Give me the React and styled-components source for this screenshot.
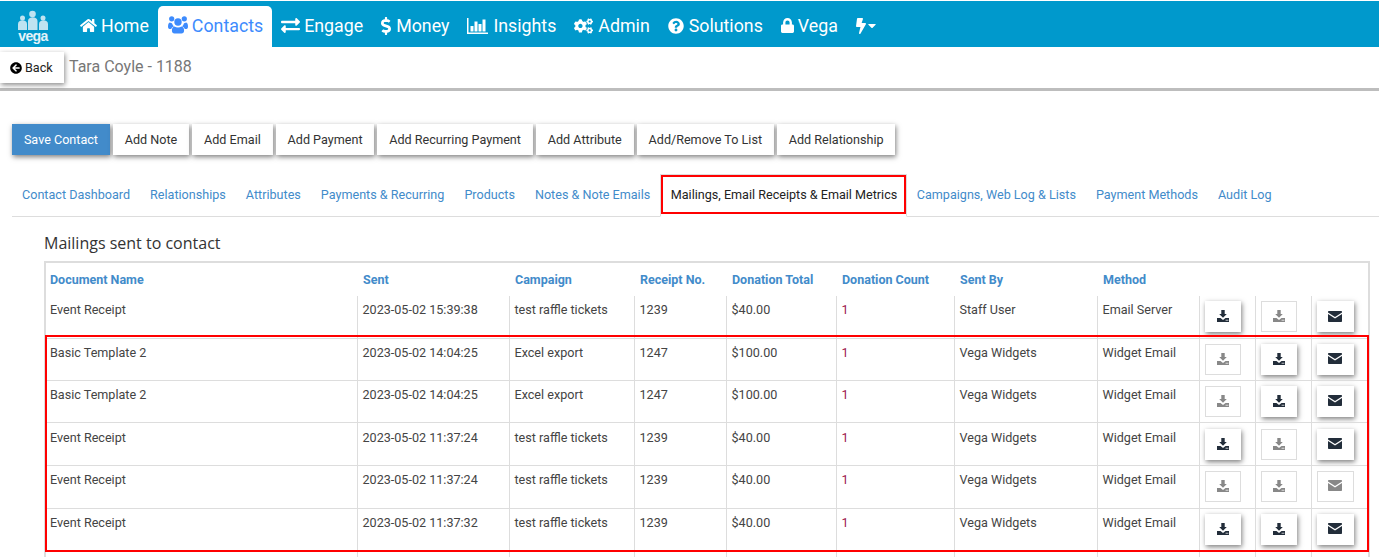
import React from 'react';
import styled, { createGlobalStyle } from 'styled-components';
import {
    FaHome, FaExchangeAlt, FaDollarSign, FaCogs, FaQuestionCircle,
    FaLock, FaBolt, FaCaretDown, FaArrowCircleLeft,
} from 'react-icons/fa';

const GlobalStyle = createGlobalStyle`
    html, body {
        margin: 0;
        padding: 0;
        background: #fff;
        font-family: Roboto, "Liberation Sans", sans-serif;
        overflow: hidden;
    }
    * { box-sizing: border-box; }
`;

const Page = styled.div`
    position: relative;
    width: 1379px;
    height: 557px;
    overflow: hidden;
`;

const NavBar = styled.nav`
    display: flex;
    align-items: flex-end;
    height: 46px;
    margin-top: 1px;
    background: #0099cc;
`;

const LogoBox = styled.div`
    width: 80px;
    height: 46px;
    padding: 9px 0 0 18px;

    svg { display: block; }
`;

const LogoWord = styled.div`
    width: 30px;
    font-family: "Liberation Sans", sans-serif;
    font-size: 14px;
    font-weight: 700;
    line-height: 10px;
    letter-spacing: -0.6px;
    text-align: center;
    color: #e4f3f9;
`;

const NavItem = styled.a`
    display: flex;
    align-items: center;
    flex-shrink: 0;
    gap: ${props => props.$gap}px;
    height: ${props => props.$active ? 41 : 46}px;
    padding: ${props => props.$active ? '0 9px 3px 10px' : '3px 0 0'};
    margin-right: ${props => props.$space}px;
    border-radius: 5px 5px 0 0;
    font-size: 17.8px;
    color: ${props => props.$active ? '#3d8bfd' : '#fff'};
    background: ${props => props.$active ? '#fff' : 'transparent'};

    svg {
        flex-shrink: 0;
        width: ${props => props.$iconW}px;
        height: ${props => props.$iconH}px;
    }
`;

const BoltGroup = styled.span`
    display: flex;
    align-items: center;
    gap: 2px;

    svg:first-child { width: 10px; height: 16px; }
    svg:last-child { width: 8px; height: 13px; }
`;

const SubBar = styled.div`
    display: flex;
    align-items: center;
    height: 41px;
    box-shadow: 0 3px 0 #bdbdbd;
    margin-bottom: 36px;
`;

const BackButton = styled.button`
    display: flex;
    align-items: center;
    gap: 3px;
    width: 64px;
    height: 31px;
    margin: 0 5px 0 0;
    padding: 0 0 0 10px;
    border: 0;
    background: #fff;
    font: 12.6px Roboto, sans-serif;
    color: #222;
    box-shadow: 1px 2px 5px rgba(0, 0, 0, 0.45);

    svg { font-size: 12px; color: #000; }
`;

const ContactName = styled.div`
    margin-top: -2px;
    font-size: 16px;
    color: #777;
`;

const Toolbar = styled.div`
    display: flex;
    gap: 3px;
    padding-left: 12px;
`;

const ActionButton = styled.button`
    height: 31px;
    padding: 0 11.9px;
    border: 0;
    font: 12.6px Roboto, sans-serif;
    color: ${props => props.$primary ? '#fff' : '#333'};
    background: ${props => props.$primary ? '#428bca' : '#fff'};
    box-shadow: 1px 2px 5px rgba(0, 0, 0, 0.5);
`;

const Tabs = styled.ul`
    display: flex;
    height: 43px;
    margin: 19px 0 0 12px;
    padding: 0;
    list-style: none;
    border-bottom: 1px solid #ddd;
`;

const Tab = styled.li`
    display: flex;
    align-items: center;
    height: 43px;
    padding: 0 10px 3px;
    font-size: 12.6px;
    color: #428bca;
`;

const ActiveTab = styled(Tab)`
    position: relative;
    padding: 0 8.5px 3px 9.5px;
    border: 1px solid #ddd;
    border-bottom: 1px solid #fff;
    color: #222;
    background: #fff;

    &::after {
        content: '';
        position: absolute;
        top: 0;
        left: 0;
        right: 0;
        bottom: 2px;
        border: 2px solid #f00;
    }
`;

const SectionTitle = styled.h3`
    margin: 16px 0 7px 44px;
    font: 400 16px "Open Sans", sans-serif;
    line-height: 21px;
    color: #333;
`;

const TableWrap = styled.div`
    width: 1326px;
    margin-left: 44px;
    border: 2px solid #ddd;
    border-bottom: 0;
`;

const Table = styled.table`
    width: 100%;
    table-layout: fixed;
    border-collapse: collapse;
    font-size: 12.6px;
`;

const HeadCell = styled.th`
    height: 33px;
    padding: 0 0 0 6px;
    font-size: 12.5px;
    font-weight: 700;
    text-align: left;
    color: #428bca;

    &:first-child { padding-left: 4px; }
`;

const Row = styled.tr`
    height: ${props => props.$h}px;
    border-bottom: 1px solid #ddd;
`;

const Cell = styled.td`
    padding: ${props => props.$top + 1}px 4px 0 5px;
    vertical-align: top;
    color: ${props => props.$accent ? '#a0204f' : '#444'};
    border-left: 1px solid #ddd;
    line-height: 15px;

    &:first-child {
        padding-left: 4px;
        border-left: 0;
    }
`;

const IconCell = styled.td`
    padding: ${props => props.$top}px 0 0 5px;
    vertical-align: top;
    border-left: 1px solid #ddd;
`;

const IconButton = styled.button`
    display: flex;
    align-items: center;
    justify-content: center;
    width: ${props => props.$wide ? 37 : 36}px;
    height: 31px;
    padding: 0 0 1px;
    background: #fff;
    border: ${props => props.$off ? '1px solid #ddd' : 0};
    color: ${props => props.$off ? '#888' : '#222d3a'};
    box-shadow: ${props => props.$off ? 'none' : '1px 2px 5px rgba(0, 0, 0, 0.5)'};
`;

const RedBox = styled.div`
    position: absolute;
    left: 45px;
    top: 335px;
    width: 1324px;
    height: 217px;
    border: 2px solid #f00;
    pointer-events: none;
`;

const VegaPeople = () => (
    <svg width="30" height="21" viewBox="0 0 30 21" fill="#bfe3f1">
        <circle cx="4.500" cy="8" r="2.500" />
        <path d="M0 20v-6c0-5 9-5 9 0v6z" />
        <circle cx="25" cy="8" r="2.500" />
        <path d="M21 20v-6c0-5 9-5 9 0v6z" />
        <circle cx="14.500" cy="4" r="3.300" />
        <path d="M10 20v-9c0-5 9.500-5 9.500 0v9z" />
    </svg>
);

const UsersIcon = () => (
    <svg viewBox="0 0 20 18" fill="currentColor">
        <circle cx="3.700" cy="2.800" r="2.600" />
        <circle cx="16.300" cy="2.800" r="2.600" />
        <circle cx="10" cy="6" r="3.700" />
        <path d="M0 10.500C0 8 1 6.500 2 6.500c.6.500 1.300.7 2 .7.300 1.400 1 2.500 2 3.300-1.200.3-2.200 1.200-2.800 2.500H1.500C.6 13 0 12 0 10.500z" />
        <path d="M20 10.500C20 8 19 6.500 18 6.500c-.6.500-1.300.7-2 .7-.3 1.400-1 2.500-2 3.300 1.200.3 2.200 1.200 2.800 2.500h1.700c.9 0 1.500-1 1.500-2.500z" />
        <path d="M6.500 10.500c1 .7 2.200 1.100 3.500 1.100s2.500-.4 3.500-1.100c1.700.2 2.600 2 2.600 4 0 1.800-1 3.100-2.600 3.100h-7c-1.600 0-2.600-1.300-2.600-3.100 0-2 .9-3.800 2.600-4z" />
    </svg>
);

const ChartIcon = () => (
    <svg viewBox="0 0 21 18" fill="currentColor">
        <path d="M0 1h1.500v14.500H21V17H0z" />
        <path d="M3.500 9h3v5.500h-3zM7.500 4.500h3v10h-3zM11.500 7h3v7.500h-3zM15.500 2.500h3v12h-3z" />
    </svg>
);

const DownloadIcon = () => (
    <svg width="12" height="12" viewBox="0 0 12 12" fill="currentColor">
        <path d="M4.300 0h3.400v4h2.100L6 7.800 2.200 4h2.100z" />
        <path fillRule="evenodd" d="M0 8h3.500L6 10l2.500-2H12v4H0zM8.700 9.800v1h1v-1zM10.300 9.800v1h1v-1z" />
    </svg>
);

const MailIcon = () => (
    <svg width="14" height="11" viewBox="0 0 14 11" fill="currentColor">
        <path d="M0 .8C0 .3.300 0 .8 0h12.400c.5 0 .8.300.8.800v.7L7 6 0 1.500z" />
        <path d="M0 3l7 4.600L14 3v7.200c0 .5-.3.800-.8.800H.8c-.5 0-.8-.3-.8-.8z" />
    </svg>
);

const navItems = [
    { label: 'Home', icon: <FaHome />, space: 9, w: 17, h: 15, gap: 4 },
    { label: 'Contacts', icon: <UsersIcon />, active: true, space: 9, w: 20, h: 18, gap: 4 },
    { label: 'Engage', icon: <FaExchangeAlt />, space: 18, w: 19, h: 19, gap: 4 },
    { label: 'Money', icon: <FaDollarSign />, space: 18, w: 10, h: 18, gap: 5 },
    { label: 'Insights', icon: <ChartIcon />, space: 18, w: 21, h: 18, gap: 5 },
    { label: 'Admin', icon: <FaCogs />, space: 18, w: 19, h: 16, gap: 5 },
    { label: 'Solutions', icon: <FaQuestionCircle />, space: 18, w: 16, h: 16, gap: 5 },
    { label: 'Vega', icon: <FaLock />, space: 18, w: 13, h: 15, gap: 4 },
];

const actions = [
    'Add Note', 'Add Email', 'Add Payment', 'Add Recurring Payment',
    'Add Attribute', 'Add/Remove To List', 'Add Relationship',
];

const tabs = [
    'Contact Dashboard', 'Relationships', 'Attributes', 'Payments & Recurring',
    'Products', 'Notes & Note Emails', 'Mailings, Email Receipts & Email Metrics',
    'Campaigns, Web Log & Lists', 'Payment Methods', 'Audit Log',
];

const columns = [
    ['Document Name', 311], ['Sent', 152], ['Campaign', 125], ['Receipt No.', 92],
    ['Donation Total', 110], ['Donation Count', 118], ['Sent By', 143], ['Method', 102],
    ['', 56], ['', 56], ['', 59],
];

const rows = [
    { name: 'Event Receipt', sent: '2023-05-02 15:39:38', campaign: 'test raffle tickets', receipt: '1239', total: '$40.00', by: 'Staff User', method: 'Email Server', off: [false, true, false], h: 42, top: 5 },
    { name: 'Basic Template 2', sent: '2023-05-02 14:04:25', campaign: 'Excel export', receipt: '1247', total: '$100.00', by: 'Vega Widgets', method: 'Widget Email', off: [true, false, false], h: 42, top: 5 },
    { name: 'Basic Template 2', sent: '2023-05-02 14:04:25', campaign: 'Excel export', receipt: '1247', total: '$100.00', by: 'Vega Widgets', method: 'Widget Email', off: [true, false, false], h: 42, top: 5 },
    { name: 'Event Receipt', sent: '2023-05-02 11:37:24', campaign: 'test raffle tickets', receipt: '1239', total: '$40.00', by: 'Vega Widgets', method: 'Widget Email', off: [false, true, false], h: 43, top: 6 },
    { name: 'Event Receipt', sent: '2023-05-02 11:37:24', campaign: 'test raffle tickets', receipt: '1239', total: '$40.00', by: 'Vega Widgets', method: 'Widget Email', off: [true, true, true], h: 43, top: 5 },
    { name: 'Event Receipt', sent: '2023-05-02 11:37:32', campaign: 'test raffle tickets', receipt: '1239', total: '$40.00', by: 'Vega Widgets', method: 'Widget Email', off: [false, false, false], h: 43, top: 5 },
    { name: '', sent: '', campaign: '', receipt: '', total: '', by: '', method: '', off: [], h: 20, top: 5 },
];

const App = () => {
    return (
        <Page>
            <GlobalStyle />
            <NavBar>
                <LogoBox>
                    <VegaPeople />
                    <LogoWord>vega</LogoWord>
                </LogoBox>
                {navItems.map(item => (
                    <NavItem
                        key={item.label}
                        $active={item.active}
                        $space={item.space}
                        $iconW={item.w}
                        $iconH={item.h}
                        $gap={item.gap}
                    >
                        {item.icon}
                        {item.label}
                    </NavItem>
                ))}
                <NavItem $space={0} $gap={0}>
                    <BoltGroup><FaBolt /><FaCaretDown /></BoltGroup>
                </NavItem>
            </NavBar>

            <SubBar>
                <BackButton><FaArrowCircleLeft />Back</BackButton>
                <ContactName>Tara Coyle - 1188</ContactName>
            </SubBar>

            <Toolbar>
                <ActionButton $primary>Save Contact</ActionButton>
                {actions.map(label => <ActionButton key={label}>{label}</ActionButton>)}
            </Toolbar>

            <Tabs>
                {tabs.map(label => (
                    label.startsWith('Mailings')
                        ? <ActiveTab key={label}>{label}</ActiveTab>
                        : <Tab key={label}>{label}</Tab>
                ))}
            </Tabs>

            <SectionTitle>Mailings sent to contact</SectionTitle>

            <TableWrap>
                <Table>
                    <colgroup>
                        {columns.map(([label, width], i) => <col key={i} style={{ width }} />)}
                    </colgroup>
                    <thead>
                        <tr>
                            {columns.map(([label], i) => <HeadCell key={i}>{label}</HeadCell>)}
                        </tr>
                    </thead>
                    <tbody>
                        {rows.map((row, i) => (
                            <Row key={i} $h={row.h}>
                                <Cell $top={row.top}>{row.name}</Cell>
                                <Cell $top={row.top}>{row.sent}</Cell>
                                <Cell $top={row.top}>{row.campaign}</Cell>
                                <Cell $top={row.top}>{row.receipt}</Cell>
                                <Cell $top={row.top}>{row.total}</Cell>
                                <Cell $top={row.top} $accent>{row.name && '1'}</Cell>
                                <Cell $top={row.top}>{row.by}</Cell>
                                <Cell $top={row.top}>{row.method}</Cell>
                                {[0, 1, 2].map(n => (
                                    <IconCell key={n} $top={row.top}>
                                        {row.off.length > 0 && (
                                            <IconButton $off={row.off[n]} $wide={n === 2}>
                                                {n === 2 ? <MailIcon /> : <DownloadIcon />}
                                            </IconButton>
                                        )}
                                    </IconCell>
                                ))}
                            </Row>
                        ))}
                    </tbody>
                </Table>
            </TableWrap>

            <RedBox />
        </Page>
    );
};

export default App;
